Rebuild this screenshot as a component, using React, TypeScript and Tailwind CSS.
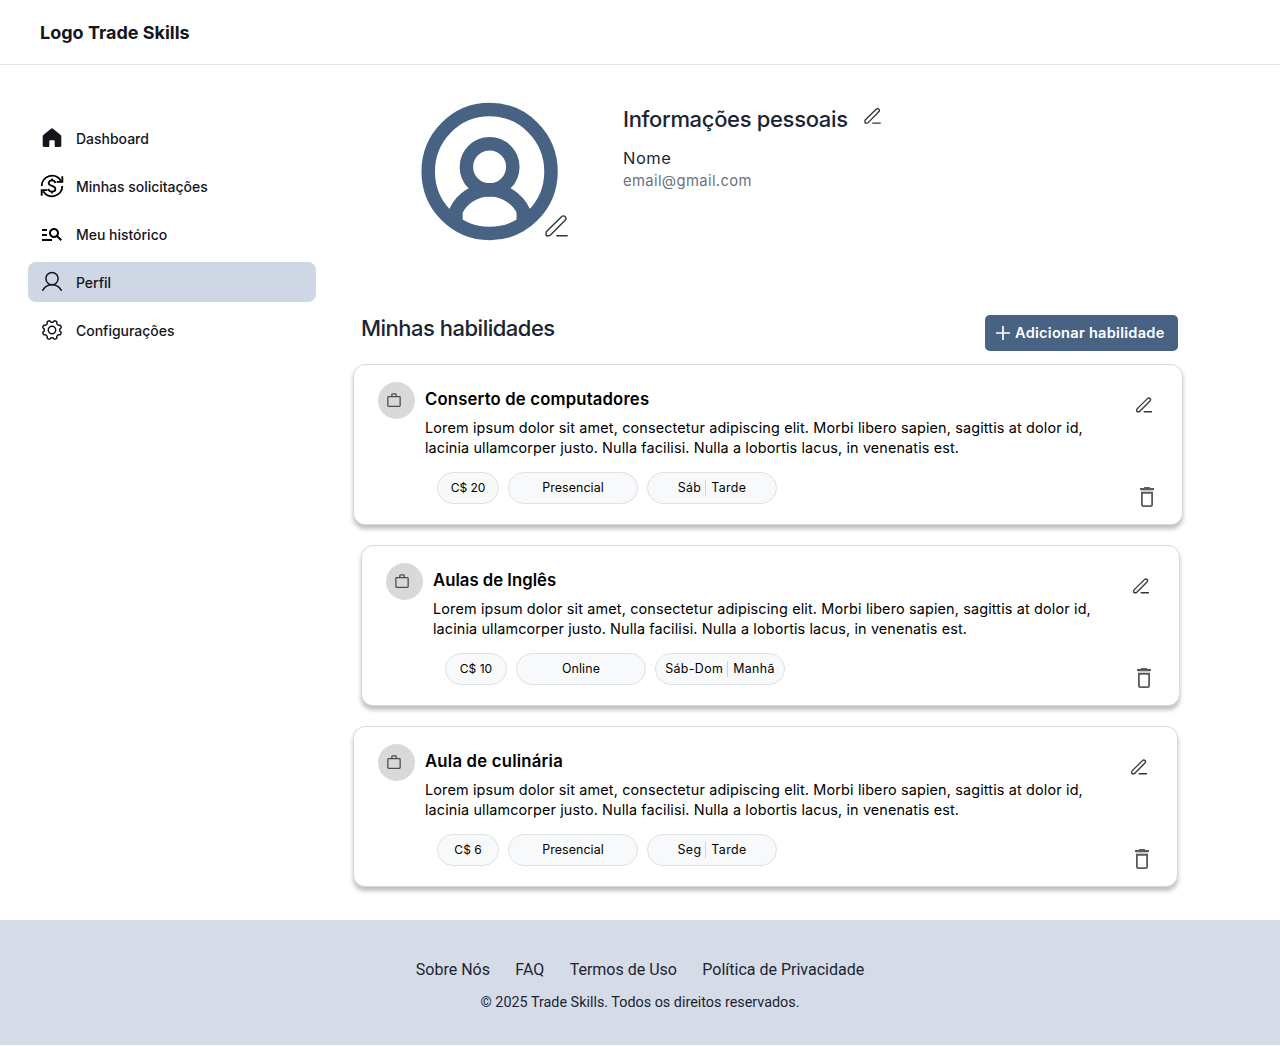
import React from "react";
import { MdOutlineManageSearch } from "react-icons/md";

function HomeIcon() {
  return (
    <svg viewBox="0 0 24 24" className="size-6" fill="#14151f">
      <path d="M11 2.7a1.5 1.5 0 0 1 2 0l7.4 6.1c.6.5.9 1.1.9 1.9v9.1c0 .7-.5 1.2-1.2 1.2h-4.3c-.7 0-1.1-.5-1.1-1.1v-4.6c0-.6-.4-1-1-1h-3.4c-.6 0-1 .4-1 1v4.6c0 .6-.4 1.1-1.1 1.1H3.900c-.7 0-1.200-.5-1.200-1.200v-9.100c0-.8.3-1.400.9-1.900z" />
    </svg>
  );
}

function ExchangeIcon() {
  return (
    <svg viewBox="0 0 24 24" className="size-6" fill="none" stroke="#000" strokeWidth="1.9">
      <path d="M1.700 12A10.300 10.300 0 0 1 20.800 6.700" />
      <path d="M22.300 2.200v5.700h-5.700" />
      <path d="M22.300 12A10.300 10.300 0 0 1 3.200 17.300" />
      <path d="M1.700 21.800v-5.700h5.700" />
      <path strokeWidth="1.800" d="M15.400 9c-.3-1.700-1.600-2.600-3.400-2.600-2 0-3.300 1-3.300 2.600 0 3.900 6.700 2 6.700 6 0 1.600-1.400 2.600-3.400 2.600s-3.400-1-3.600-2.700M12 4.500v2M12 17.500v2" />
    </svg>
  );
}

function PersonIcon() {
  return (
    <svg viewBox="0 0 24 24" className="size-6" fill="none" stroke="#14151f" strokeWidth="1.5" strokeLinecap="round">
      <circle cx="12" cy="8.6" r="6.1" />
      <path d="M2.700 20.300C4.600 16.900 8 14.700 12 14.700s7.400 2.200 9.300 5.600" />
    </svg>
  );
}

const gearPath =
  Array.from({ length: 160 }, (_, i) => {
    const a = (i / 160) * Math.PI * 2;
    const r = 8.7 + 0.95 * Math.tanh(2.2 * -Math.cos(8 * a));
    return `${i ? "L" : "M"}${(12 + r * Math.cos(a)).toFixed(2)} ${(12 + r * Math.sin(a)).toFixed(2)}`;
  }).join("") + "Z";

function GearIcon() {
  return (
    <svg viewBox="0 0 24 24" className="size-6" fill="none" stroke="#14151f" strokeWidth="1.5" strokeLinejoin="round">
      <path d={gearPath} />
      <circle cx="12" cy="12" r="3.7" />
    </svg>
  );
}

function EditIcon({ className, strokeWidth }: { className: string; strokeWidth: number }) {
  return (
    <svg viewBox="0 0 23 22" className={className} fill="none" stroke="#33343a" strokeWidth={strokeWidth} strokeLinecap="round" strokeLinejoin="round">
      <path d="M1.500 16.600 16.500 1.800c1-1 2.700-1 3.700-.1.900 1 .9 2.500-.1 3.500L5.500 20.100c-.4.400-.9.600-1.400.6H1.900c-.5 0-.8-.3-.8-.8v-2.200c0-.4.100-.8.400-1.100z" />
      <path d="M11.800 20.700h10.400" />
    </svg>
  );
}

function TrashIcon() {
  return (
    <svg viewBox="0 0 14 20" className="h-5 w-3.5">
      <path d="M4.500 0h5l1 1H14v2H0V1h3.500z" fill="#5a5a5a" />
      <path d="M1 3h12v2H1z" fill="#c9c9c9" />
      <path d="M1.900 5.900h10.200v11.900a1.300 1.300 0 0 1-1.300 1.300H3.200a1.300 1.300 0 0 1-1.300-1.300z" fill="none" stroke="#5a5a5a" strokeWidth="1.800" />
    </svg>
  );
}

function BriefcaseIcon() {
  return (
    <svg viewBox="0 0 14 14" className="size-3.5" fill="none" stroke="#4d4d4d" strokeWidth="1.300">
      <rect x="0.850" y="3.700" width="12.300" height="9.600" rx="0.800" />
      <path d="M4.800 3.700V1.700c0-.5.300-.8.800-.8h2.800c.5 0 .8.300.8.800v2" />
    </svg>
  );
}

function Avatar() {
  return (
    <svg viewBox="0 0 137 139" className="h-[139px] w-[137px]" fill="none" stroke="#486284" strokeWidth="13.500">
      <clipPath id="face">
        <circle cx="68.600" cy="69.500" r="61" />
      </clipPath>
      <ellipse cx="68.600" cy="69.500" rx="61.400" ry="62" />
      <circle cx="68.600" cy="64.900" r="23.200" />
      <path clipPath="url(#face)" d="M34.900 130V109A37.300 37.300 0 0 1 102.300 109V130" />
    </svg>
  );
}

const nav = [
  { label: "Dashboard", icon: <HomeIcon /> },
  { label: "Minhas solicitações", icon: <ExchangeIcon /> },
  { label: "Meu histórico", icon: <MdOutlineManageSearch size={24} color="#000" /> },
  { label: "Perfil", icon: <PersonIcon />, active: true },
  { label: "Configurações", icon: <GearIcon /> },
];

const skills = [
  { title: "Conserto de computadores", price: "C$ 20", mode: "Presencial", day: "Sáb", time: "Tarde", box: "w-[830px]", tracking: "tracking-[0.17px]" },
  { title: "Aulas de Inglês", price: "C$ 10", mode: "Online", day: "Sáb-Dom", time: "Manhã", box: "ml-2 w-[819px]", tracking: "tracking-[0.02px]" },
  { title: "Aula de culinária", price: "C$ 6", mode: "Presencial", day: "Seg", time: "Tarde", box: "w-[825px]", tracking: "tracking-[0.22px]" },
];

const chip = "flex h-8 items-center justify-center rounded-full border border-[#dde1e7] bg-[#f8f9fb]";

function SkillCard({ skill }: { skill: (typeof skills)[number] }) {
  return (
    <article className={`flex h-[161px] rounded-xl border border-[#d9d9d9] bg-white pl-6 shadow-[0_4px_4px_rgba(0,0,0,0.25)] ${skill.box}`}>
      <div className="mt-[17px] flex size-[37px] shrink-0 rounded-full bg-[#d9d9d9] pt-[11px] pl-[9px]">
        <BriefcaseIcon />
      </div>
      <div className="ml-[10px] flex-1 pt-[22px] text-black">
        <h3 className={`text-[16.700px] leading-6 font-semibold whitespace-nowrap ${skill.tracking}`}>{skill.title}</h3>
        <p className="mt-[7px] text-[14.400px] leading-5 whitespace-nowrap">
          <span className="tracking-[0.152px]">Lorem ipsum dolor sit amet, consectetur adipiscing elit. Morbi libero sapien, sagittis at dolor id,</span>
          <br />
          <span className="tracking-[0.127px]">lacinia ullamcorper justo. Nulla facilisi. Nulla a lobortis lacus, in venenatis est.</span>
        </p>
        <div className="mt-[14px] ml-[12px] flex gap-[9px]">
          <span className={`${chip} w-[62px] text-xs`}>{skill.price}</span>
          <span className={`${chip} w-[130px] text-[12.400px] tracking-[0.1px]`}>{skill.mode}</span>
          <span className={`${chip} w-[130px] text-[12.400px] tracking-[0.36px]`}>
            {skill.day}
            <i className="mr-[5px] ml-1 h-4 w-px bg-[#d0d3d8]" />
            {skill.time}
          </span>
        </div>
      </div>
      <div className="flex w-[47px] shrink-0 flex-col pt-8">
        <EditIcon className="ml-px h-4 w-4" strokeWidth={1.9} />
        <div className="mt-[74px] ml-[5px]">
          <TrashIcon />
        </div>
      </div>
    </article>
  );
}

export default function App() {
  return (
    <div className="flex h-[1046px] w-[1280px] flex-col bg-white font-['Inter','Liberation_Sans',sans-serif] text-[#14151f]">
      <header className="flex h-[65px] shrink-0 items-center border-b border-[#e2e5ea] px-10 pt-px">
        <span className="text-lg font-bold">Logo Trade Skills</span>
      </header>

      <div className="flex h-[855px] shrink-0">
        <nav className="ml-7 flex w-72 flex-col gap-2 pt-[53px]">
          {nav.map((n) => (
            <a key={n.label} className={`flex h-10 items-center gap-3 rounded-lg px-3 text-sm font-medium ${n.active ? "bg-[#ced7e3]" : ""}`}>
              {n.icon}
              <span className="pt-px tracking-[-0.02px]">{n.label}</span>
            </a>
          ))}
        </nav>

        <main className="ml-[37px] w-[830px]">
          <section className="flex h-[250px] pt-[37px]">
            <div className="ml-[68px]">
              <Avatar />
            </div>
            <div className="-ml-[13px] pt-[113px]">
              <EditIcon className="h-[22px] w-[23px]" strokeWidth={1.4} />
            </div>
            <div className="ml-[55px] pt-[3px]">
              <div className="flex h-7 items-center">
                <h1 className="text-[22px] leading-7 font-medium tracking-[-0.33px] whitespace-nowrap text-[#1c2433]">Informações pessoais</h1>
                <EditIcon className="mb-[7px] ml-4 h-4 w-[17px]" strokeWidth={1.8} />
              </div>
              <p className="mt-[13px] text-[16.500px] leading-6 tracking-[0.5px] text-[#1f2937]">Nome</p>
              <p className="mt-px text-[14.800px] leading-5 tracking-[0.36px] text-[#6b7280]">email@gmail.com</p>
            </div>
          </section>

          <div className="flex h-[49px] items-start justify-between pr-[5px] pl-2">
            <h2 className="text-[22px] leading-[26px] font-medium tracking-[-0.5px] text-[#1c2433]">Minhas habilidades</h2>
            <button className="flex h-9 w-[193px] items-center rounded-[5px] bg-[#486284] pl-[11px] text-[14.600px] font-semibold tracking-[0.260px] whitespace-nowrap text-white">
              <svg viewBox="0 0 14 14" className="mr-[5px] size-3.5 shrink-0" stroke="currentColor" strokeWidth="1.700">
                <path d="M7 0v14M0 7h14" />
              </svg>
              <span className="pt-[2px]">Adicionar habilidade</span>
            </button>
          </div>

          <div className="flex flex-col gap-5">
            {skills.map((s) => (
              <SkillCard key={s.title} skill={s} />
            ))}
          </div>
        </main>
      </div>

      <footer className="flex h-[125px] shrink-0 flex-col items-center bg-[#d5dbe7] pt-[38px] font-['Roboto',sans-serif] text-[#1c2433]">
        <div className="flex gap-[25.400px] text-base leading-6">
          <a>Sobre Nós</a>
          <a>FAQ</a>
          <a>Termos de Uso</a>
          <a>Política de Privacidade</a>
        </div>
        <p className="mt-[11px] text-[14.370px] leading-5">© 2025 Trade Skills. Todos os direitos reservados.</p>
      </footer>
    </div>
  );
}
